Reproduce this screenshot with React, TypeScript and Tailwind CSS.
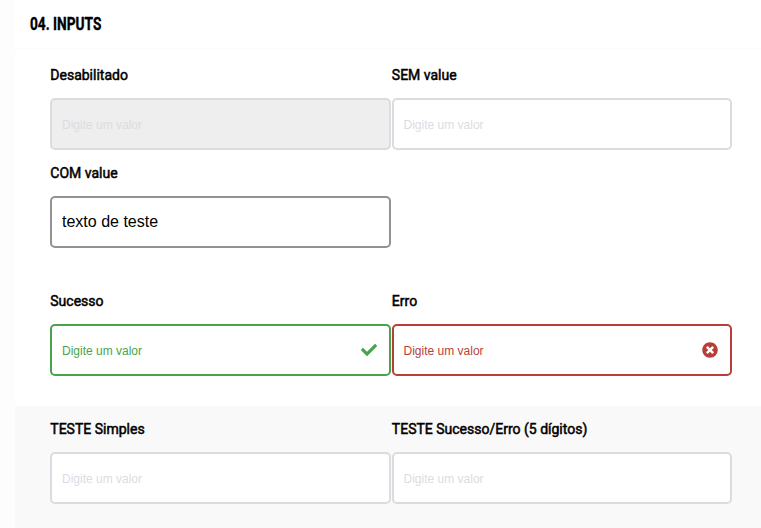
import type { ReactNode } from 'react';
import { FaCheck, FaTimesCircle } from 'react-icons/fa';

type FieldProps = {
  label: string;
  tone: string;
  value?: string;
  disabled?: boolean;
  icon?: ReactNode;
};

function Field({ label, tone, value, disabled, icon }: FieldProps) {
  return (
    <label className="block">
      <span className="block h-[33px] pl-[0.3px] text-sm leading-5 text-black [-webkit-text-stroke:0.5px_black]">
        {label}
      </span>
      <span
        className={`flex h-[52px] items-center rounded-[5px] border-2 pr-3 pl-[10px] ${tone} ${disabled ? 'bg-[#eeeeee]' : 'bg-white'}`}
      >
        <input
          className="h-full min-w-0 flex-1 bg-transparent font-['Liberation_Sans',sans-serif] text-base text-black outline-none placeholder:text-xs placeholder:opacity-100"
          placeholder="Digite um valor"
          defaultValue={value}
          disabled={disabled}
        />
        {icon}
      </span>
    </label>
  );
}

const idle = 'border-[#dcdce0] [&>input]:placeholder:text-[#dcdce0]';
const filled = 'border-[#929292]';
const success = 'border-[#48a44b] [&>input]:placeholder:text-[#48a44b]';
const error = 'border-[#b83e39] [&>input]:placeholder:text-[#b83e39]';

export default function App() {
  return (
    <div className="h-[528px] w-[761px] overflow-hidden bg-[#fdfdfd] pl-[15px] font-[Roboto,sans-serif]">
      <header className="h-[49px] border-b border-[#fcfcfc] bg-white pt-[10px] pl-[15px]">
        <h1 className="origin-left scale-x-[0.76] text-[18px] leading-[27px] font-bold text-black [-webkit-text-stroke:0.4px_black]">
          04. INPUTS
        </h1>
      </header>
      <section className="h-[357px] bg-white pt-4 pl-[35px]">
        <div className="grid grid-cols-[340.7px_340.7px] gap-x-[0.85px] gap-y-[13px]">
          <Field label="Desabilitado" tone={idle} disabled />
          <Field label="SEM value" tone={idle} />
          <Field label="COM value" tone={filled} value="texto de teste" />
        </div>
        <div className="mt-[43px] grid grid-cols-[340.7px_340.7px] gap-x-[0.85px]">
          <Field label="Sucesso" tone={success} icon={<FaCheck className="size-4 text-[#48a44b]" />} />
          <Field label="Erro" tone={error} icon={<FaTimesCircle className="size-4 text-[#b83e39]" />} />
        </div>
      </section>
      <section className="h-[122px] bg-[#f9f9f9] pt-[13px] pl-[35px]">
        <div className="grid grid-cols-[340.7px_340.7px] gap-x-[0.85px]">
          <Field label="TESTE Simples" tone={idle} />
          <Field label="TESTE Sucesso/Erro (5 dígitos)" tone={idle} />
        </div>
      </section>
    </div>
  );
}
